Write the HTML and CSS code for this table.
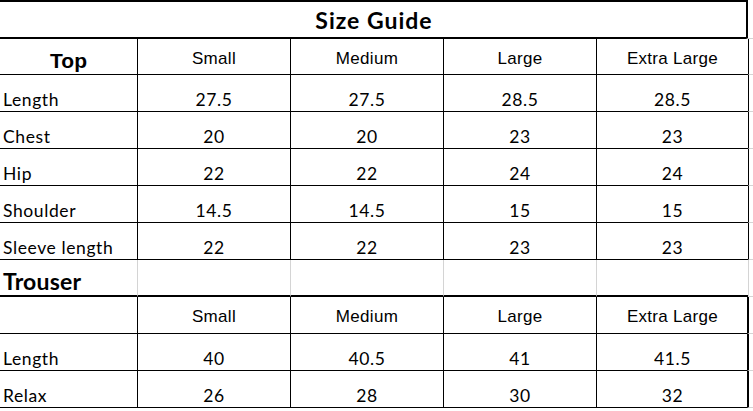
FILE: index.html
```html
<!DOCTYPE html>
<html>
<head>
<meta charset="utf-8">
<link rel="stylesheet" href="styles.css">
</head>
<body>
<div class="sheet">
  <div class="row row-title">
    <div class="cell title">Size Guide</div>
    <div class="gutter gutter-title"></div>
  </div>
  <div class="row row-head">
    <div class="cell section-top">Top</div>
    <div class="cell head">Small</div>
    <div class="cell head">Medium</div>
    <div class="cell head">Large</div>
    <div class="cell head">Extra Large</div>
    <div class="gutter"></div>
  </div>
  <div class="row">
    <div class="cell label">Length</div>
    <div class="cell num">27.5</div>
    <div class="cell num">27.5</div>
    <div class="cell num">28.5</div>
    <div class="cell num">28.5</div>
    <div class="gutter"></div>
  </div>
  <div class="row">
    <div class="cell label">Chest</div>
    <div class="cell num">20</div>
    <div class="cell num">20</div>
    <div class="cell num">23</div>
    <div class="cell num">23</div>
    <div class="gutter"></div>
  </div>
  <div class="row">
    <div class="cell label">Hip</div>
    <div class="cell num">22</div>
    <div class="cell num">22</div>
    <div class="cell num">24</div>
    <div class="cell num">24</div>
    <div class="gutter"></div>
  </div>
  <div class="row">
    <div class="cell label">Shoulder</div>
    <div class="cell num">14.5</div>
    <div class="cell num">14.5</div>
    <div class="cell num">15</div>
    <div class="cell num">15</div>
    <div class="gutter"></div>
  </div>
  <div class="row">
    <div class="cell label">Sleeve length</div>
    <div class="cell num">22</div>
    <div class="cell num">22</div>
    <div class="cell num">23</div>
    <div class="cell num">23</div>
    <div class="gutter"></div>
  </div>
  <div class="row row-section">
    <div class="cell section">Trouser</div>
    <div class="cell blank"></div>
    <div class="cell blank"></div>
    <div class="cell blank"></div>
    <div class="cell blank"></div>
    <div class="gutter gutter-grey"></div>
  </div>
  <div class="row row-head2">
    <div class="cell label"></div>
    <div class="cell head">Small</div>
    <div class="cell head">Medium</div>
    <div class="cell head">Large</div>
    <div class="cell head">Extra Large</div>
    <div class="gutter gutter-thick"></div>
  </div>
  <div class="row">
    <div class="cell label">Length</div>
    <div class="cell num">40</div>
    <div class="cell num">40.5</div>
    <div class="cell num">41</div>
    <div class="cell num">41.5</div>
    <div class="gutter gutter-thick"></div>
  </div>
  <div class="row">
    <div class="cell label">Relax</div>
    <div class="cell num">26</div>
    <div class="cell num">28</div>
    <div class="cell num">30</div>
    <div class="cell num">32</div>
    <div class="gutter gutter-thick"></div>
  </div>
</div>
</body>
</html>
```

FILE: styles.css
```css
html, body {
  margin: 0;
  padding: 0;
  background: #ffffff;
}

.sheet {
  width: 753px;
  display: flex;
  flex-direction: column;
  color: #000;
}

.row {
  display: grid;
  grid-template-columns: 137px 153px 153px 153px 152px 5px;
  height: 37px;
}

.cell {
  box-sizing: border-box;
  border-bottom: 1px solid #000;
  display: flex;
  align-items: flex-end;
  justify-content: center;
  line-height: 1;
  white-space: nowrap;
}

.cell + .cell {
  border-left: 1px solid #000;
}

.gutter {
  box-sizing: border-box;
  border-left: 1px solid #000;
  border-bottom: 1px solid #d4d4d4;
}

.gutter-thick {
  border-left: 2px solid #000;
  margin-left: -1px;
}

.gutter-grey {
  border-left: 1px solid #d4d4d4;
}

/* title row */
.row-title {
  height: 39px;
  grid-template-columns: 748px 5px;
}

.title {
  border-top: 2px solid #000;
  border-bottom: 2px solid #000;
  font-family: Lato, "Open Sans", sans-serif;
  font-weight: 700;
  font-size: 23px;
  letter-spacing: 1px;
  align-items: center;
  padding-top: 1px;
  padding-left: 0;
}

.gutter-title {
  border-left: 2px solid #000;
  margin-left: -2px;
  margin-top: 2px;
  border-bottom: 1px solid #d4d4d4;
}

/* header rows */
.row-head {
  height: 36px;
}

.head {
  font-family: "Liberation Sans", Arial, sans-serif;
  font-size: 17px;
  letter-spacing: 0.3px;
  align-items: center;
  padding-top: 3px;
}

.section-top {
  font-family: "Liberation Sans", Arial, sans-serif;
  font-weight: 700;
  font-size: 21px;
  padding-bottom: 3px;
}

.label {
  justify-content: flex-start;
  padding-left: 3px;
  padding-bottom: 3px;
  font-family: Lato, "Open Sans", sans-serif;
  font-size: 17.5px;
  letter-spacing: 0.6px;
}

.num {
  padding-bottom: 3px;
  font-family: Lato, "Open Sans", sans-serif;
  font-size: 17.5px;
  letter-spacing: 0.6px;
}

/* trouser section row */
.row-section {
  height: 37px;
}

.row-section .cell {
  border-bottom: 2px solid #000;
}

.row-section .cell + .cell {
  border-left: 1px solid #d4d4d4;
}

.section {
  justify-content: flex-start;
  padding-left: 3px;
  padding-bottom: 2px;
  font-family: Lato, "Open Sans", sans-serif;
  font-weight: 700;
  font-size: 23px;
  letter-spacing: 0.2px;
}
```
